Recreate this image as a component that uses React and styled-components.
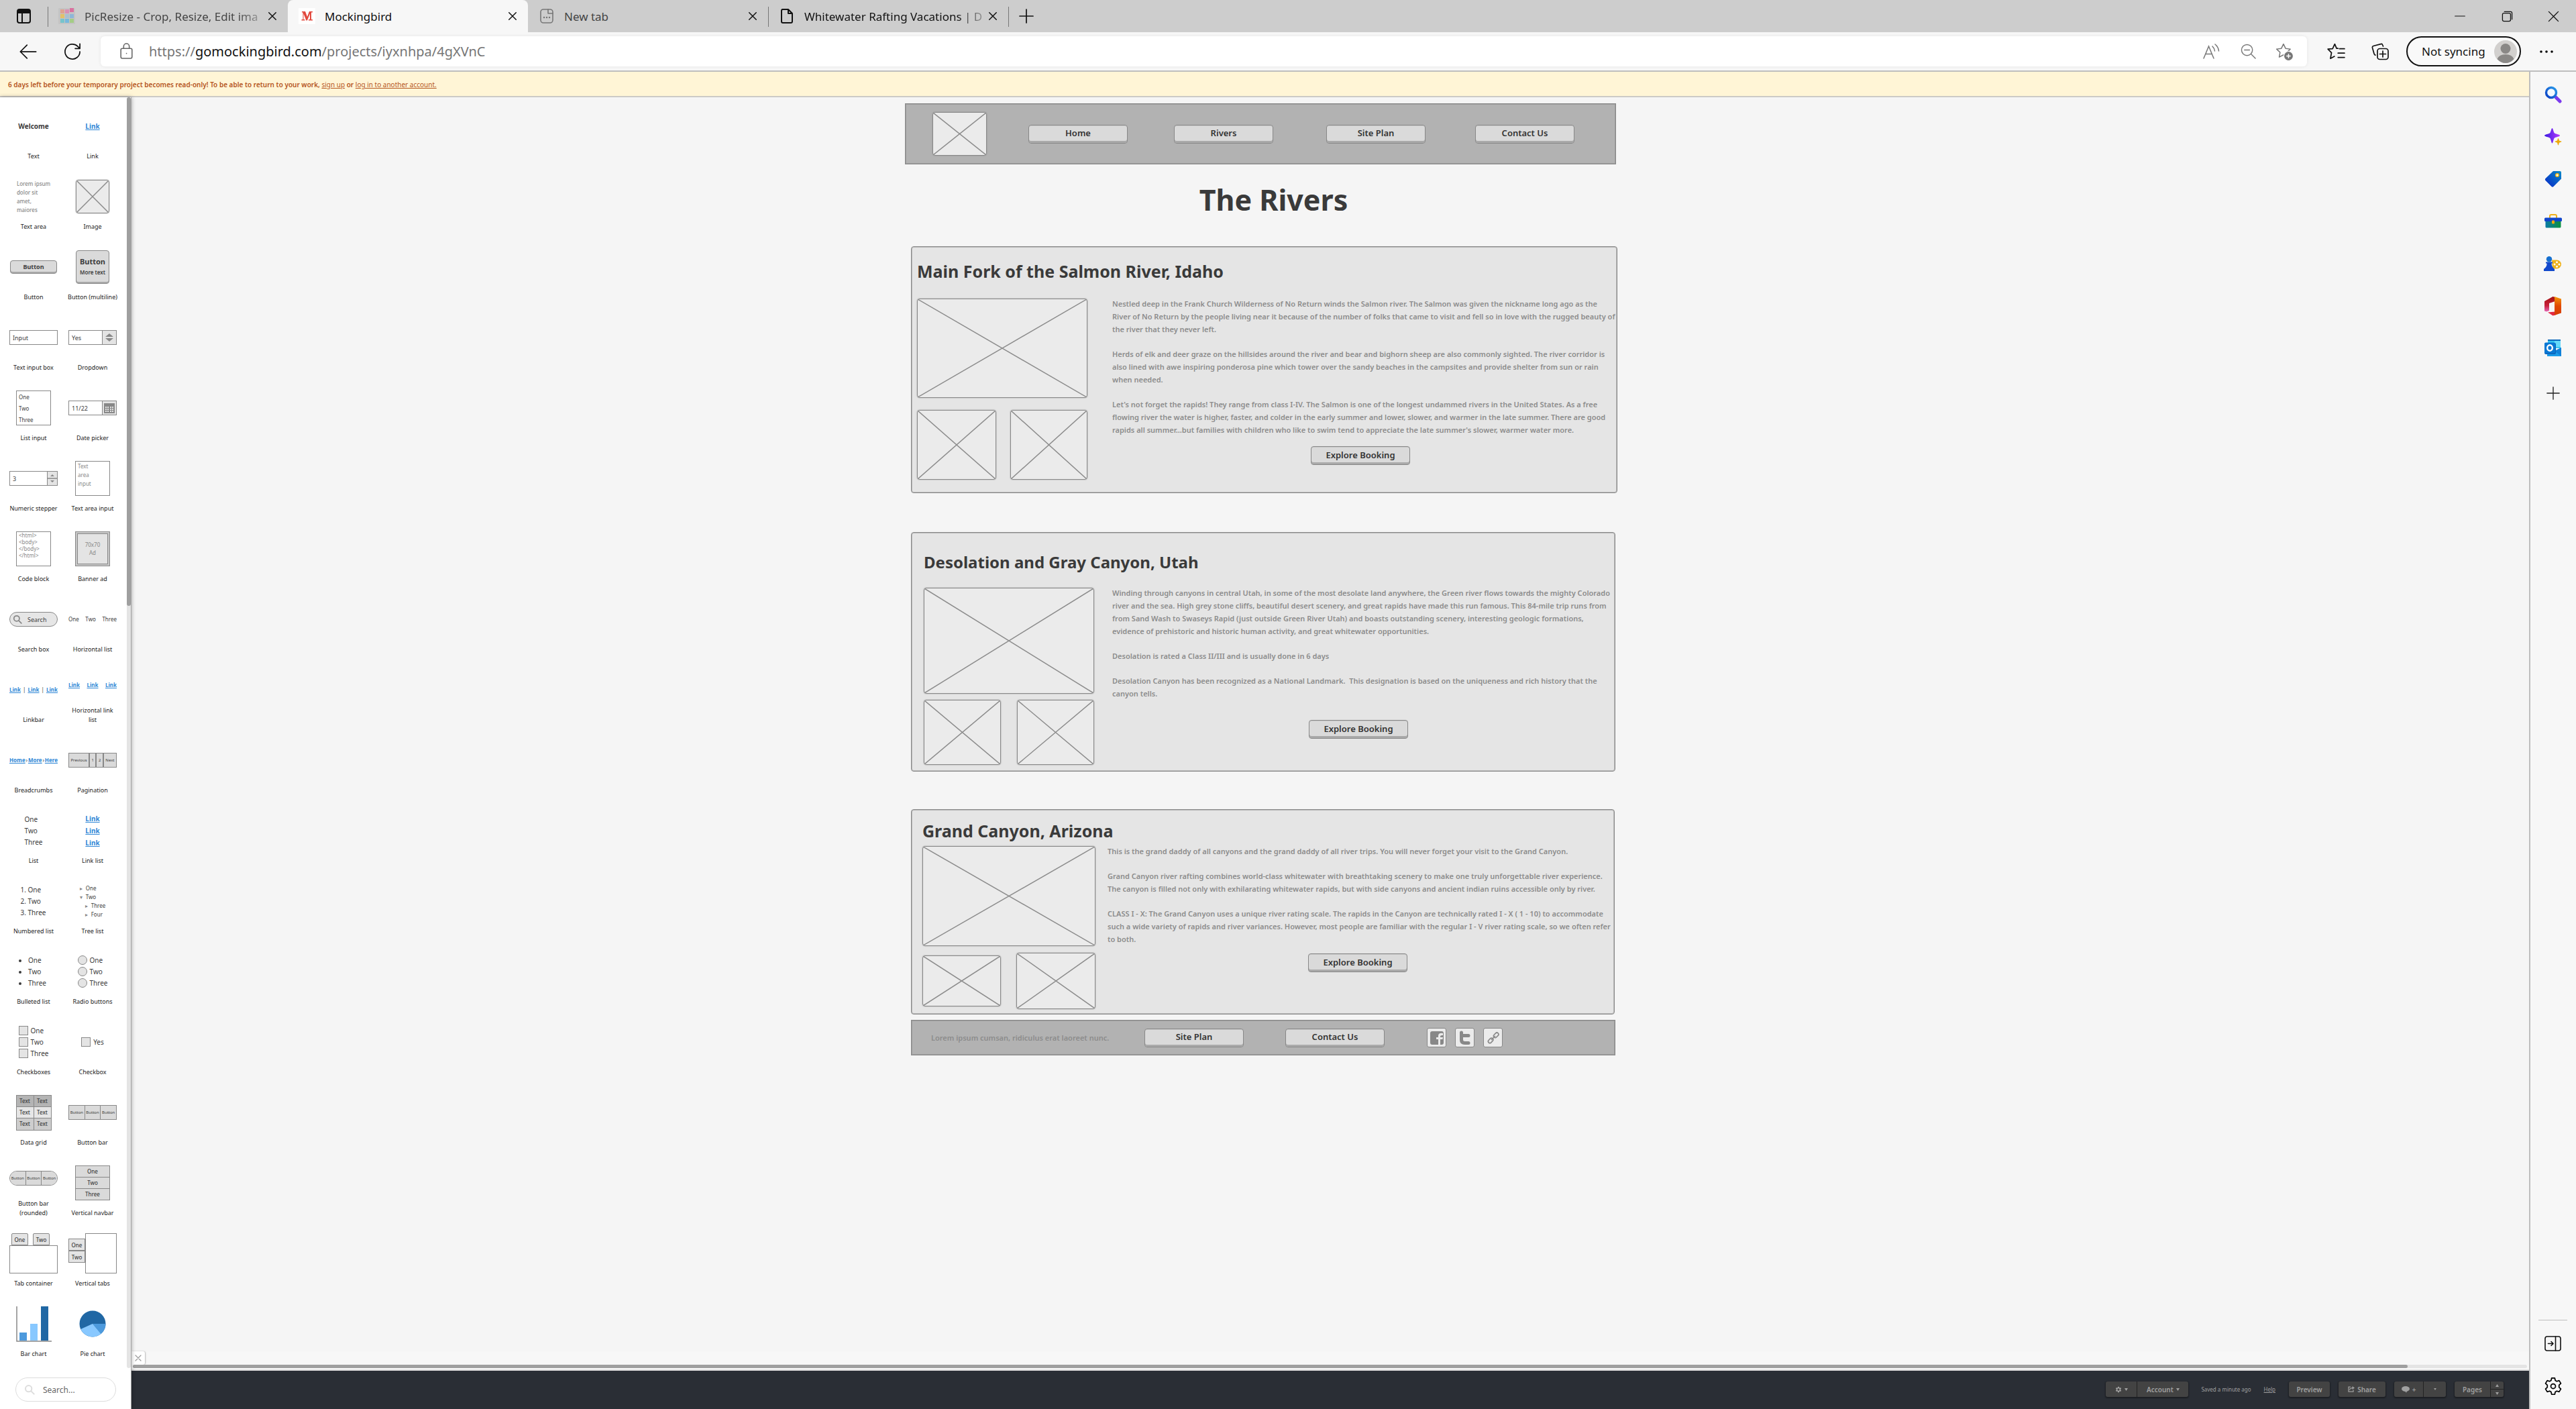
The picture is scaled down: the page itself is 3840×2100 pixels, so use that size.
import React from "react";
import styled, { createGlobalStyle, css } from "styled-components";

const ui = `"Noto Sans", "Open Sans", sans-serif`;

const Global = createGlobalStyle`
  *, *::before, *::after { box-sizing: border-box; }
  body { margin: 0; background: #f5f5f5; font-family: ${ui}; color: #3c3c3c; }
  button, input, select, textarea { font-family: inherit; margin: 0; }
`;

/* ---------- browser frame ---------- */

const Shell = styled.div`
  min-height: 100vh;
  display: flex;
  flex-direction: column;
  background: #f7f7f7;
`;

const TabStrip = styled.header`
  height: 48px;
  background: #cdcdcd;
  display: flex;
  align-items: stretch;
`;

const IconButton = styled.button`
  border: 0;
  padding: 0;
  background: none;
  width: ${(p) => p.$w || 32}px;
  height: ${(p) => p.$h || 32}px;
  display: flex;
  align-items: center;
  justify-content: center;
  flex: none;
  color: ${(p) => p.$color || "#111"};
`;

const TabActions = styled.div`
  width: 71px;
  display: flex;
  align-items: center;
  justify-content: center;
`;

const Tab = styled.div`
  width: 358px;
  display: flex;
  align-items: center;
  gap: 14px;
  padding: 0 13px 0 16px;
  font-size: 17px;
  color: ${(p) => (p.$dark ? "#111" : "#444")};
  position: relative;
  ${(p) =>
    p.$active &&
    css`
      background: #f7f7f7;
      border-radius: 8px 8px 0 0;
    `}
  ${(p) =>
    p.$divided &&
    css`
      &::before {
        content: "";
        position: absolute;
        left: 0;
        top: 10px;
        bottom: 8px;
        width: 1px;
        background: #777;
      }
    `}
`;

const TabTitle = styled.span`
  flex: 1;
  min-width: 0;
  white-space: nowrap;
  margin-right: -14px;
  ${(p) =>
    p.$fade &&
    css`
      mask-image: linear-gradient(to right, #000 84%, rgba(0, 0, 0, 0.2) 100%);
    `}
`;

const TabEnd = styled.div`
  flex: 1;
  display: flex;
  align-items: center;
  padding-left: 11px;
  position: relative;
  &::before {
    content: "";
    position: absolute;
    left: 0;
    top: 10px;
    bottom: 8px;
    width: 1px;
    background: #777;
  }
`;

const WindowButtons = styled.div`
  display: flex;
  align-items: center;
`;

const Toolbar = styled.div`
  height: 59px;
  border-bottom: 2px solid #bebebe;
  display: flex;
  align-items: center;
  padding: 0 7px 0 9px;
`;

const AddressBar = styled.form`
  flex: 1;
  height: 45px;
  margin-left: 9px;
  background: #fff;
  border-radius: 6px;
  box-shadow: 0 0 5px rgba(0, 0, 0, 0.08);
  display: flex;
  align-items: center;
  padding: 0 18px 0 26px;
`;

const Address = styled.a`
  flex: 1;
  padding-left: 21px;
  font-size: 20px;
  color: #767676;
  text-decoration: none;
  b {
    font-weight: 400;
    color: #111;
  }
`;

const ToolGroup = styled.div`
  display: flex;
  align-items: center;
  gap: ${(p) => p.$gap}px;
  padding: ${(p) => p.$pad || "0"};
`;

const Profile = styled.button`
  height: 45px;
  width: 171px;
  border: 2px solid #111;
  border-radius: 23px;
  background: #f9f9f9;
  display: flex;
  align-items: center;
  justify-content: space-between;
  padding: 0 4px 0 21px;
  font-size: 17px;
  color: #111;
`;

const Body = styled.div`
  flex: 1;
  display: flex;
`;

const Page = styled.div`
  flex: 1;
  min-width: 0;
  display: flex;
  flex-direction: column;
`;

const Rail = styled.aside`
  width: 70px;
  border-left: 2px solid #bebebe;
  background: #f7f7f7;
  display: flex;
  flex-direction: column;
  align-items: center;
  padding: 2px 1px 3px 0;
`;

const RailButton = styled.button`
  border: 0;
  padding: 0;
  background: none;
  width: 100%;
  height: ${(p) => (p.$tall ? 72 : 63)}px;
  display: flex;
  align-items: center;
  justify-content: center;
`;

const RailRule = styled.hr`
  width: 43px;
  border: 0;
  border-top: 1px solid #bebebe;
  margin: auto 0 3px;
`;

/* ---------- application ---------- */

const Notice = styled.p`
  margin: 0;
  height: 38px;
  padding-left: 12px;
  line-height: 39px;
  background: #fff5d6;
  border-bottom: 2px solid #cccac6;
  font-size: 10px;
  font-weight: 600;
  color: #b5561e;
  a {
    color: inherit;
    font-weight: 400;
  }
`;

const Workspace = styled.div`
  flex: 1;
  display: flex;
`;

const Palette = styled.aside`
  width: 196px;
  background: #fff;
  border-right: 1px solid #a5a5a5;
  box-shadow: 0 0 6px rgba(0, 0, 0, 0.35);
  position: relative;
  display: flex;
  flex-direction: column;
`;

const PaletteScroll = styled.div`
  display: flex;
  padding-left: 6px;
`;

const PaletteGrid = styled.div`
  flex: 1;
  display: grid;
  grid-template-columns: 88px 88px;
  grid-auto-rows: 105px;
`;

const ScrollTrack = styled.div`
  width: 6px;
  border-radius: 3px;
  background: #e4e4e4;
  margin-bottom: -4px;
`;

const ScrollThumb = styled.div`
  height: 40%;
  border-radius: 3px;
  background: #9f9f9f;
`;

const Cell = styled.div`
  display: flex;
  flex-direction: column;
  align-items: center;
  padding: 5px 0 10px;
`;

const Thumb = styled.div`
  flex: 1;
  display: flex;
  align-items: center;
  justify-content: center;
`;

const CellLabel = styled.span`
  font-size: 9px;
  line-height: 14px;
  color: #222;
  text-align: center;
  margin: 0 -4px;
  white-space: pre;
`;

const PaletteSearch = styled.label`
  width: 150px;
  height: 36px;
  margin: 18px 0 11px 23px;
  border: 1px solid #dcdcdc;
  border-radius: 18px;
  display: flex;
  align-items: center;
  gap: 12px;
  padding: 0 12px;
  input {
    flex: 1;
    min-width: 0;
    border: 0;
    padding: 0;
    font-size: 12px;
    outline: 0;
  }
  input::placeholder {
    color: #666;
  }
`;

/* palette samples */

const line = "#888";

const Copy = styled.span`
  font-size: ${(p) => p.$size || 10}px;
  line-height: ${(p) => p.$lh || 13}px;
  font-weight: ${(p) => (p.$bold ? 700 : 500)};
  color: ${(p) => (p.$soft ? "#888" : "#3c3c3c")};
  white-space: pre;
`;

const DemoLink = styled.a`
  color: #2f87d6;
  font-weight: 700;
  font-size: ${(p) => p.$size || 8}px;
  line-height: 18px;
`;

const LinkRow = styled.nav`
  display: flex;
  width: 72px;
  justify-content: space-between;
  align-items: center;
  font-size: 8px;
  line-height: 14px;
`;

const SampleButton = styled.button`
  border: 1px solid ${line};
  border-radius: 4px;
  background: #dadada;
  box-shadow: inset 0 -2px #aaa;
  color: #3c3c3c;
  font-weight: 700;
  padding: 0;
  width: ${(p) => (p.$square ? 50 : 70)}px;
  height: ${(p) => (p.$square ? 50 : 20)}px;
  font-size: ${(p) => (p.$square ? 11 : 9)}px;
  line-height: 16px;
  small {
    display: block;
    font-size: 8px;
    font-weight: 600;
  }
`;

const Field = styled.div`
  width: 72px;
  height: 22px;
  border: 1px solid ${line};
  background: #fff;
  display: flex;
  align-items: stretch;
`;

const fieldText = css`
  flex: 1;
  min-width: 0;
  border: 0;
  padding: 0 0 0 4px;
  background: none;
  font-size: 9px;
  color: #3c3c3c;
  appearance: none;
`;
const FieldInput = styled.input`
  ${fieldText}
`;
const FieldSelect = styled.select`
  ${fieldText}
`;

const FieldAddon = styled.span`
  width: ${(p) => p.$w}px;
  border-left: 1px solid ${line};
  background: #e4e4e4;
  display: flex;
  align-items: center;
  justify-content: center;
`;

const SampleArea = styled.textarea`
  width: 52px;
  height: 52px;
  resize: none;
  overflow: hidden;
  border: 1px solid ${line};
  padding: 0 3px;
  font-size: 8px;
  line-height: ${(p) => p.$lh}px;
  color: ${(p) => (p.$dark ? "#3c3c3c" : "#888")};
`;

const BannerAd = styled.div`
  width: 52px;
  height: 52px;
  border: 1px solid ${line};
  background: #c8c8c8;
  padding: 2px;
  div {
    height: 100%;
    border: 1px solid ${line};
    background: #e4e4e4;
    display: grid;
    place-content: center;
    text-align: center;
    font-size: 8px;
    line-height: 12px;
    color: #888;
  }
`;

const PillSearch = styled(Field)`
  border-radius: 11px;
  background: #e6e6e6;
  align-items: center;
  padding-left: 4px;
  input {
    padding-left: 8px;
  }
`;

const Bar = styled.div`
  display: flex;
  width: 72px;
  height: 22px;
  border: 1px solid ${line};
  border-radius: ${(p) => (p.$round ? 11 : 0)}px;
  overflow: hidden;
  button {
    flex: ${(p) => (p.$auto ? "auto" : "1")};
    min-width: 0;
    border: 0;
    padding: 0;
    background: #dadada;
    font-size: 6px;
    color: #3c3c3c;
  }
  button + button {
    border-left: ${(p) => (p.$auto ? 2 : 1)}px solid ${line};
  }
`;

const listCss = css`
  margin: 0;
  padding: 0 0 0 ${(p) => p.$indent || 0}px;
  font-size: 10px;
  line-height: 17px;
  list-style: ${(p) => p.$marker || "none"};
`;
const Bullets = styled.ul`
  ${listCss}
`;
const Numbers = styled.ol`
  ${listCss}
`;

const Tree = styled.ul`
  margin: 0;
  padding: 0 0 0 ${(p) => (p.$nested ? 8 : 0)}px;
  list-style: none;
  font-size: 8px;
  line-height: 13px;
  li::before {
    content: "▸";
    color: #888;
    display: inline-block;
    width: 9px;
  }
  li.open::before {
    content: "▾";
  }
`;

const Choices = styled.div`
  display: flex;
  flex-direction: column;
  gap: 3px;
  label {
    display: flex;
    align-items: center;
    gap: 4px;
    font-size: 10px;
    line-height: 14px;
  }
  input {
    appearance: none;
    width: 14px;
    height: 14px;
    border: 1px solid ${line};
    background: #e4e4e4;
  }
  input[type="radio"] {
    border-radius: 50%;
  }
`;

const DataGrid = styled.table`
  width: 53px;
  height: 53px;
  border-collapse: collapse;
  font-size: 8px;
  line-height: 10px;
  th,
  td {
    height: 17px;
    border: 1px solid ${line};
    padding: 0;
    text-align: center;
    font-weight: 500;
    background: #e6e6e6;
  }
  th {
    background: #b4b4b4;
  }
  tr:last-child td {
    background: #cdcdcd;
  }
  thead tr:last-child th {
    background: #b4b4b4;
  }
`;

const VerticalNav = styled.nav`
  width: 52px;
  height: 52px;
  border: 1px solid ${line};
  display: flex;
  flex-direction: column;
  button {
    flex: 1;
    border: 0;
    padding: 0;
    background: #dadada;
    font-size: 8px;
    line-height: 10px;
    font-weight: 500;
    color: #3c3c3c;
  }
  button + button {
    border-top: 1px solid ${line};
  }
`;

const TabBox = styled.div`
  display: flex;
  flex-direction: ${(p) => (p.$side ? "row" : "column")};
  width: 72px;
  height: 60px;
`;

const TabSet = styled.div`
  display: flex;
  flex-direction: ${(p) => (p.$side ? "column" : "row")};
  justify-content: ${(p) => (p.$side ? "center" : "flex-start")};
  gap: ${(p) => (p.$side ? 0 : 7)}px;
  padding: ${(p) => (p.$side ? "0 0 8px" : "0 0 0 3px")};
  button {
    width: 25px;
    height: 18px;
    padding: 0;
    border: 1px solid ${line};
    border-radius: ${(p) => (p.$side ? "0" : "2px 2px 0 0")};
    background: #e4e4e4;
    font-size: 8px;
    font-weight: 500;
    color: #3c3c3c;
  }
`;

const TabPane = styled.div`
  flex: 1;
  border: 1px solid ${line};
  background: #fff;
`;

/* ---------- canvas ---------- */

const CanvasColumn = styled.div`
  flex: 1;
  min-width: 0;
  display: flex;
  flex-direction: column;
`;

const Canvas = styled.main`
  flex: 1;
  background: #f5f5f5;
  display: grid;
  grid-template-columns: minmax(0, 1153fr) 1062px minmax(0, 1359fr);
  align-items: start;
  padding-top: 9px;
`;

const Mockup = styled.div`
  grid-column: 2;
  display: flex;
  flex-direction: column;
`;

const SiteNav = styled.nav`
  width: 1060px;
  height: 91px;
  border: 1px solid #888;
  box-shadow: inset 0 0 0 1px #9c9c9c;
  background: #b2b2b2;
  display: grid;
  grid-template-columns: 143px 217px 227px 222px 148px;
  align-items: center;
  padding-left: 40px;
`;

const SiteTitle = styled.h1`
  margin: 23px 0 39px;
  padding-left: 37px;
  font-size: 43px;
  line-height: 60px;
  font-weight: 700;
  text-align: center;
  color: #3a3a3a;
`;

const WireButton = styled.button`
  width: 148px;
  height: 28px;
  border: 1px solid #888;
  border-radius: 4px;
  background: #dadada;
  box-shadow: inset 0 -3px #aaa, inset 0 1px #c8c8c8;
  padding: 0 0 3px;
  font-size: 13px;
  line-height: 20px;
  font-weight: 600;
  color: #333;
`;

const Card = styled.article`
  width: ${(p) => p.$w}px;
  height: ${(p) => p.$h}px;
  margin: 0 0 ${(p) => p.$after}px 9px;
  border: 1px solid #888;
  border-radius: 4px;
  box-shadow: inset 0 0 0 1px #b8b8b8;
  background: #e5e5e5;
  padding: ${(p) => p.$top}px 0 0 ${(p) => p.$left}px;
`;

const CardTitle = styled.h2`
  margin: 0 0 ${(p) => p.$gap}px;
  font-size: ${(p) => p.$size}px;
  line-height: 34px;
  font-weight: 700;
  color: #3a3a3a;
`;

const CardBody = styled.div`
  display: flex;
  gap: ${(p) => p.$gap}px;
`;

const Media = styled.div`
  width: ${(p) => p.$w}px;
  flex: none;
  padding-top: 2px;
  display: flex;
  flex-direction: column;
  gap: ${(p) => p.$gap}px;
`;

const MediaRow = styled.div`
  display: flex;
  justify-content: space-between;
  align-items: center;
`;

const Frame = styled.div`
  width: ${(p) => (p.$w ? `${p.$w}px` : "100%")};
  height: ${(p) => p.$h}px;
  border: 1px solid #888;
  border-radius: 4px;
  box-shadow: 0 0 1px 1px rgba(136, 136, 136, 0.25);
  background: #ebebeb;
  svg {
    display: block;
    width: 100%;
    height: 100%;
  }
`;

const Prose = styled.div`
  flex: 1;
  min-width: 0;
  display: flex;
  flex-direction: column;
  gap: 18px;
  p {
    margin: 0;
    font-size: 11px;
    line-height: 19px;
    font-weight: 600;
    color: #8c8c8c;
    white-space: pre;
  }
`;

const BookingRow = styled.div`
  display: flex;
  justify-content: flex-end;
  padding-right: 308px;
  margin-top: ${(p) => p.$shift}px;
`;

const SiteFooter = styled.footer`
  width: 1050px;
  height: 53px;
  margin-left: 9px;
  border: 1px solid #888;
  box-shadow: inset 0 0 0 1px #9c9c9c;
  background: #b2b2b2;
  display: grid;
  grid-template-columns: 318px 210px 211px auto;
  align-items: center;
  padding-left: 29px;
  p {
    margin: 0;
    font-size: 11px;
    font-weight: 600;
    color: #8c8c8c;
  }
`;

const SocialRow = styled.div`
  display: flex;
  gap: 13px;
`;

const SocialLink = styled.a`
  width: 29px;
  height: 29px;
  border: 1px solid #888;
  border-radius: 3px;
  background: #ebebeb;
  display: grid;
  place-items: center;
`;

const PanelToggle = styled.button`
  width: 20px;
  height: 20px;
  border: 0;
  border-radius: 0 3px 3px 0;
  background: #fff;
  box-shadow: 1px 0 2px rgba(0, 0, 0, 0.25);
  padding: 0;
  display: grid;
  place-items: center;
`;

const HScroll = styled.div`
  height: 9px;
  padding: 0 3px 0 2px;
  border-bottom: 2px solid #ddd;
  background: #f8f8f8;
`;

const HTrack = styled.div`
  height: 5px;
  border-radius: 3px;
  background: #e4e4e4;
  div {
    width: 95%;
    height: 100%;
    border-radius: 3px;
    background: #9f9f9f;
  }
`;

const StatusBar = styled.footer`
  height: 57px;
  background: #2a2e35;
  display: flex;
  align-items: center;
  justify-content: flex-end;
  padding: 0 38px 2px 0;
  font-size: 8px;
  color: #a0a0a0;
  a {
    color: inherit;
    margin: 0 20px 0 19px;
  }
`;

const Split = styled.div`
  display: flex;
  height: 23px;
  margin-right: ${(p) => p.$gap || 0}px;
  border-radius: 3px;
  box-shadow: 0 1px 2px 1px rgba(0, 0, 0, 0.35);
  overflow: hidden;
`;

const DarkButton = styled.button`
  width: ${(p) => p.$w}px;
  border: 0;
  padding: 0;
  background: #434343;
  color: #a0a0a0;
  font-size: 10px;
  font-weight: 600;
  display: flex;
  align-items: center;
  justify-content: center;
  gap: 4px;
  & + & {
    border-left: 1px solid #222;
  }
`;

const Stepper = styled.div`
  width: 20px;
  border-left: 1px solid #222;
  display: flex;
  flex-direction: column;
  button {
    flex: 1;
    border: 0;
    padding: 0;
    background: #434343;
    color: #a0a0a0;
    display: grid;
    place-items: center;
  }
  button + button {
    border-top: 1px solid #222;
  }
`;

/* ---------- drawings ---------- */

const Stroke = ({ size = 24, w = 1.5, color = "currentColor", children }) => (
  <svg width={size} height={size} viewBox="0 0 24 24" fill="none" stroke={color} strokeWidth={w} strokeLinecap="round" strokeLinejoin="round" aria-hidden="true">
    {children}
  </svg>
);

const Caret = ({ up, size = 5 }) => (
  <svg width={size} height={size - 1} viewBox="0 0 10 8" fill="currentColor" aria-hidden="true">
    <path d={up ? "M5 0l5 8H0z" : "M0 0h10L5 8z"} />
  </svg>
);

const Close = () => (
  <Stroke size={18} w={2}><path d="M5 5l14 14M19 5L5 19" /></Stroke>
);

const CloseTab = () => (
  <IconButton $w={20} aria-label="Close tab"><Close /></IconButton>
);

const Placeholder = ({ w, h }) => (
  <Frame $w={w} $h={h}>
    <svg viewBox="0 0 100 100" preserveAspectRatio="none" aria-hidden="true">
      <path d="M0 0L100 100M100 0L0 100" stroke="#8c8c8c" strokeWidth="1.5" vectorEffect="non-scaling-stroke" />
    </svg>
  </Frame>
);

const Fav = () => (
  <svg width="25" height="24" viewBox="0 0 25 24" aria-hidden="true">
    <rect width="25" height="24" rx="1" fill="#c4c4c4" />
    {[["#e0a290", 3, 2], ["#d98fb5", 10, 2], ["#d9719f", 17, 0], ["#e2c069", 3, 9], ["#a9bfd0", 10, 9], ["#8fb6d8", 17, 9], ["#77c4cc", 3, 16], ["#76b8dd", 10, 16], ["#a4cd86", 17, 16]].map(([c, x, y]) => (
      <rect key={x + "-" + y} x={x} y={y} width="6" height="6" fill={c} />
    ))}
  </svg>
);

const starPath = "M12 2.5l2.9 6 6.6.9-4.8 4.6 1.2 6.5L12 17.4l-5.9 3.1 1.2-6.5L2.5 9.4l6.6-.9z";

const SearchGlyph = () => (
  <svg width="26" height="26" viewBox="0 0 26 26" aria-hidden="true">
    <defs><linearGradient id="sg" x1="0" y1="1" x2="1" y2="0"><stop stopColor="#0a3ec4" /><stop offset="1" stopColor="#2b9bea" /></linearGradient></defs>
    <path d="M17 17l6 6" stroke="#7c3aed" strokeWidth="5" strokeLinecap="round" />
    <circle cx="10" cy="10" r="7.5" fill="#f3f9ff" stroke="url(#sg)" strokeWidth="3.4" />
  </svg>
);
const SparkGlyph = () => (
  <svg width="26" height="26" viewBox="0 0 26 26" aria-hidden="true">
    <defs><linearGradient id="sp"><stop stopColor="#3b1be0" /><stop offset="1" stopColor="#b43cff" /></linearGradient></defs>
    <path d="M11.500 0c1.300 0 1.800 5.500 3.300 7.200 1.700 1.500 8.200 2.200 8.200 3.800s-6.500 2.300-8.200 3.800c-1.500 1.700-2 7.700-3.300 7.700s-1.800-6-3.300-7.700C6.500 13.300 0 12.600 0 11s6.500-2.300 8.200-3.800C9.700 5.500 10.200 0 11.500 0z" fill="url(#sp)" />
    <path d="M20.500 15c.8 0 1 3 1.600 3.600.7.600 3.400.7 3.400 1.500s-2.700 1-3.400 1.600c-.6.600-.8 3.800-1.600 3.800s-1-3.200-1.600-3.800c-.7-.6-3.400-.8-3.400-1.600s2.700-.9 3.400-1.500c.6-.6.8-3.600 1.600-3.600z" fill="#eda90b" />
  </svg>
);
const TagGlyph = () => (
  <svg width="26" height="26" viewBox="0 0 26 26" aria-hidden="true">
    <defs><linearGradient id="tg" x1="0" y1="1" x2="1" y2="0"><stop stopColor="#0827c9" /><stop offset="1" stopColor="#0a8ac6" /></linearGradient></defs>
    <path d="M13 1h10a2 2 0 0 1 2 2v9.500L13.500 24q-1.500 1.500-3 0L1.500 15q-1.200-1.500 0-3z" fill="url(#tg)" />
    <circle cx="19" cy="7" r="2.300" fill="#fff" stroke="#f0b410" strokeWidth="1.500" />
  </svg>
);
const CaseGlyph = () => (
  <svg width="26" height="22" viewBox="0 0 26 22" aria-hidden="true">
    <defs><linearGradient id="cg"><stop stopColor="#0b7aa6" /><stop offset="1" stopColor="#0b9140" /></linearGradient></defs>
    <path d="M8 6V3q0-2 2-2h6q2 0 2 2v3" fill="none" stroke="#efb01a" strokeWidth="2" />
    <rect x="1.500" y="8" width="23" height="12.500" rx="1.500" fill="url(#cg)" />
    <rect y="5.500" width="26" height="5.500" rx="1.500" fill="#1246cc" />
    <rect x="11" y="9.500" width="4" height="5" rx="1" fill="#f0a810" />
  </svg>
);
const GameGlyph = () => (
  <svg width="27" height="22" viewBox="0 0 27 22" aria-hidden="true">
    <path d="M12 5.500h7.500a6.500 6.500 0 0 1 0 13H13z" fill="#eeb21c" />
    <g fill="#fff"><circle cx="19.500" cy="8.800" r="1.500" /><circle cx="16" cy="12" r="1.500" /><circle cx="23" cy="12" r="1.500" /><circle cx="19.500" cy="15.200" r="1.500" /></g>
    <circle cx="8" cy="4.300" r="4.200" fill="#1670d0" />
    <path d="M3 8.500h10v2h-1.500q0 5 4.500 8.500v3H0v-3q5-3.500 4.500-8.500H3z" fill="#1249cc" />
  </svg>
);
const OfficeGlyph = () => (
  <svg width="25" height="30" viewBox="0 0 25 30" aria-hidden="true">
    <defs>
      <linearGradient id="o1" x1="0" y1="0" x2="0" y2="1"><stop stopColor="#a31212" /><stop offset=".6" stopColor="#c8203a" /><stop offset="1" stopColor="#e568b8" /></linearGradient>
      <linearGradient id="o2" x1="0" y1="0" x2="0" y2="1"><stop stopColor="#f59a0a" /><stop offset=".5" stopColor="#e04a04" /><stop offset="1" stopColor="#d63b02" /></linearGradient>
    </defs>
    <path d="M0 8L12.500 1 16 2v6l-9 3v11l-4 1.500-3-1z" fill="url(#o1)" />
    <path d="M5 24.500l11-1v5l-3.500 1z" fill="#e22a42" />
    <path d="M15 1l10 3.500v21L15 29z" fill="url(#o2)" />
  </svg>
);
const OutlookGlyph = () => (
  <svg width="25" height="25" viewBox="0 0 25 25" aria-hidden="true">
    <path d="M5 0h19v13H5z" fill="#39c5f2" /><path d="M5 0h19v2H5z" fill="#0f6bbd" /><path d="M15 2h9v9h-9z" fill="#64dafb" />
    <path d="M4 14l13 3 8-5v13H4z" fill="#1a9be8" /><path d="M25 12v13L15 17z" fill="#1181d8" />
    <rect y="5" width="17" height="17" rx="2" fill="#0b63b8" /><rect y="4.500" width="16" height="16" rx="2" fill="#0a78d4" />
    <ellipse cx="8" cy="12.500" rx="3.800" ry="4.300" fill="none" stroke="#fff" strokeWidth="2.400" />
  </svg>
);

const gearPath = "M12 1.500l2 .2.7 3 1.900 1.100 3-1 2.200 3.700-2.300 2.200v2.600l2.300 2.200-2.200 3.700-3-1-1.900 1.100-.7 3-2 .2-2-.2-.7-3-1.900-1.100-3 1L2.200 15.500l2.300-2.200v-2.600L2.200 8.500l2.200-3.700 3 1 1.900-1.100.7-3z";

const railItems = [
  ["Search", SearchGlyph], ["Discover", SparkGlyph], ["Shopping", TagGlyph], ["Tools", CaseGlyph],
  ["Games", GameGlyph], ["Microsoft 365", OfficeGlyph], ["Outlook", OutlookGlyph],
];

/* ---------- palette content ---------- */

const three = ["One", "Two", "Three"];

const Magnifier = ({ size = 14, color = "#888", w = 3 }) => (
  <Stroke size={size} w={w} color={color}><circle cx="10" cy="10" r="7" /><path d="M15.500 15.500L22 22" /></Stroke>
);

const widgets = [
  ["Text", <Copy $bold>Welcome</Copy>],
  ["Link", <DemoLink href="#link" $size={10}>Link</DemoLink>],
  ["Text area", <Copy $size={8} $soft>{"Lorem ipsum\ndolor sit\namet,\nmaiores"}</Copy>],
  ["Image", <Placeholder w={50} h={50} />],
  ["Button", <SampleButton>Button</SampleButton>],
  ["Button (multiline)", <SampleButton $square>Button<small>More text</small></SampleButton>],
  ["Text input box", <Field><FieldInput aria-label="Text input box" defaultValue="Input" /></Field>],
  ["Dropdown", <Field><FieldSelect aria-label="Dropdown"><option>Yes</option></FieldSelect><FieldAddon $w={21}><svg width="12" height="14" viewBox="0 0 12 14" aria-hidden="true"><path d="M6 1l6 5H0zM6 13l6-5H0z" fill="#888" /></svg></FieldAddon></Field>],
  ["List input", <SampleArea aria-label="List input" $dark $lh={17} readOnly value={"One\nTwo\nThree"} />],
  ["Date picker", <Field><FieldInput aria-label="Date picker" defaultValue="11/22" /><FieldAddon $w={21}><svg width="16" height="15" viewBox="0 0 16 15" aria-hidden="true"><path d="M0 0h16v15H0z" fill="#888" /><path d="M2 5h2v2H2zM5 5h2v2H5zM9 5h2v2H9zM12 5h2v2h-2zM2 8h2v2H2zM5 8h2v2H5zM9 8h2v2H9zM12 8h2v2h-2zM2 11h2v2H2zM5 11h2v2H5zM9 11h2v2H9zM12 11h2v2h-2z" fill="#e4e4e4" /></svg></FieldAddon></Field>],
  ["Numeric stepper", <Field><FieldInput aria-label="Numeric stepper" defaultValue="3" /><FieldAddon $w={15}><svg width="14" height="20" viewBox="0 0 14 20" aria-hidden="true"><path d="M0 10h14" stroke="#888" strokeWidth="1.500" /><path d="M7 4l3 3H4zM7 16l3-3H4z" fill="#888" /></svg></FieldAddon></Field>],
  ["Text area input", <SampleArea aria-label="Text area input" $lh={13} readOnly value={"Text\narea\ninput"} />],
  ["Code block", <SampleArea aria-label="Code block" $lh={10} readOnly value={"<html>\n<body>\n</body>\n</html>"} />],
  ["Banner ad", <BannerAd><div>70x70<br />Ad</div></BannerAd>],
  ["Search box", <PillSearch><Magnifier /><FieldInput aria-label="Search box" defaultValue="Search" /></PillSearch>],
  ["Horizontal list", <LinkRow>{three.map((t) => <span key={t}>{t}</span>)}</LinkRow>],
  ["Linkbar", <LinkRow><DemoLink href="#a">Link</DemoLink>|<DemoLink href="#b">Link</DemoLink>|<DemoLink href="#c">Link</DemoLink></LinkRow>],
  ["Horizontal link\nlist", <LinkRow>{three.map((t) => <DemoLink key={t} href="#link">Link</DemoLink>)}</LinkRow>],
  ["Breadcrumbs", <LinkRow><DemoLink href="#home">Home</DemoLink>›<DemoLink href="#more">More</DemoLink>›<DemoLink href="#here">Here</DemoLink></LinkRow>],
  ["Pagination", <Bar $auto><button>Previous</button><button>1</button><button>2</button><button>Next</button></Bar>],
  ["List", <Bullets>{three.map((t) => <li key={t}>{t}</li>)}</Bullets>],
  ["Link list", <Bullets>{three.map((t) => <li key={t}><DemoLink href="#link" $size={10}>Link</DemoLink></li>)}</Bullets>],
  ["Numbered list", <Numbers $marker="decimal" $indent={10}>{three.map((t) => <li key={t}>{t}</li>)}</Numbers>],
  ["Tree list", <Tree><li>One</li><li className="open">Two<Tree $nested><li>Three</li><li>Four</li></Tree></li></Tree>],
  ["Bulleted list", <Bullets $marker="disc" $indent={11}>{three.map((t) => <li key={t}>{t}</li>)}</Bullets>],
  ["Radio buttons", <Choices>{three.map((t) => <label key={t}><input type="radio" name="sample" />{t}</label>)}</Choices>],
  ["Checkboxes", <Choices>{three.map((t) => <label key={t}><input type="checkbox" />{t}</label>)}</Choices>],
  ["Checkbox", <Choices><label><input type="checkbox" />Yes</label></Choices>],
  ["Data grid", <DataGrid><thead><tr><th>Text</th><th>Text</th></tr></thead><tbody><tr><td>Text</td><td>Text</td></tr><tr><td>Text</td><td>Text</td></tr></tbody></DataGrid>],
  ["Button bar", <Bar>{three.map((t) => <button key={t}>Button</button>)}</Bar>],
  ["Button bar\n(rounded)", <Bar $round>{three.map((t) => <button key={t}>Button</button>)}</Bar>],
  ["Vertical navbar", <VerticalNav>{three.map((t) => <button key={t}>{t}</button>)}</VerticalNav>],
  ["Tab container", <TabBox><TabSet><button>One</button><button>Two</button></TabSet><TabPane /></TabBox>],
  ["Vertical tabs", <TabBox $side><TabSet $side><button>One</button><button>Two</button></TabSet><TabPane /></TabBox>],
  ["Bar chart", <svg width="53" height="53" aria-hidden="true"><path d="M1 0v52h52" fill="none" stroke="#888" strokeWidth="1.500" /><rect x="5" y="39" width="11" height="12" fill="#4d9add" /><rect x="21" y="26" width="11" height="25" fill="#88c8ff" /><rect x="37" y="0" width="11" height="51" fill="#2067a4" /></svg>],
  ["Pie chart", <svg width="40" height="40" viewBox="-20 -20 40 40" aria-hidden="true"><circle r="19.500" fill="#2067a4" /><path d="M0 0L19.500 0A19.500 19.500 0 0 1 12.500 15z" fill="#4d9add" /><path d="M0 0L12.500 15A19.500 19.500 0 0 1 -17.800 8z" fill="#88c8ff" /></svg>],
];

const rivers = [
  {
    name: "Main Fork of the Salmon River, Idaho",
    card: { $w: 1053, $h: 368, $after: 58, $top: 19, $left: 8 }, size: 25, titleGap: 22, gap: 37,
    media: { $w: 254, $gap: 18 }, big: 148, small: [[118, 104], [115, 104]], shift: -3,
    text: [
      "Nestled deep in the Frank Church Wilderness of No Return winds the Salmon river. The Salmon was given the nickname long ago as the\nRiver of No Return by the people living near it because of the number of folks that came to visit and fell so in love with the rugged beauty of\nthe river that they never left.",
      "Herds of elk and deer graze on the hillsides around the river and bear and bighorn sheep are also commonly sighted. The river corridor is\nalso lined with awe inspiring ponderosa pine which tower over the sandy beaches in the campsites and provide shelter from sun or rain\nwhen needed.",
      "Let's not forget the rapids! They range from class I-IV. The Salmon is one of the longest undammed rivers in the United States. As a free\nflowing river the water is higher, faster, and colder in the early summer and lower, slower, and warmer in the late summer. There are good\nrapids all summer...but families with children who like to swim tend to appreciate the late summer's slower, warmer water more.",
    ],
  },
  {
    name: "Desolation and Gray Canyon, Utah",
    card: { $w: 1050, $h: 357, $after: 56, $top: 27, $left: 18 }, size: 24, titleGap: 19, gap: 27,
    media: { $w: 254, $gap: 9 }, big: 158, small: [[115, 97], [115, 97]], shift: 12,
    text: [
      "Winding through canyons in central Utah, in some of the most desolate land anywhere, the Green river flows towards the mighty Colorado\nriver and the sea. High grey stone cliffs, beautiful desert scenery, and great rapids have made this run famous. This 84-mile trip runs from\nfrom Sand Wash to Swaseys Rapid (just outside Green River Utah) and boasts outstanding scenery, interesting geologic formations,\nevidence of prehistoric and historic human activity, and great whitewater opportunities.",
      "Desolation is rated a Class II/III and is usually done in 6 days",
      "Desolation Canyon has been recognized as a National Landmark.  This designation is based on the uniqueness and rich history that the\ncanyon tells.",
    ],
  },
  {
    name: "Grand Canyon, Arizona",
    card: { $w: 1049, $h: 306, $after: 8, $top: 14, $left: 16 }, size: 25, titleGap: 4, gap: 18,
    media: { $w: 258, $gap: 10 }, big: 149, small: [[117, 76], [118, 84]], shift: -6,
    text: [
      "This is the grand daddy of all canyons and the grand daddy of all river trips. You will never forget your visit to the Grand Canyon.",
      "Grand Canyon river rafting combines world-class whitewater with breathtaking scenery to make one truly unforgettable river experience.\nThe canyon is filled not only with exhilarating whitewater rapids, but with side canyons and ancient indian ruins accessible only by river.",
      "CLASS I - X: The Grand Canyon uses a unique river rating scale. The rapids in the Canyon are technically rated I - X ( 1 - 10) to accommodate\nsuch a wide variety of rapids and river variances. However, most people are familiar with the regular I - V river rating scale, so we often refer\nto both.",
    ],
  },
];

const River = ({ r }) => (
  <Card {...r.card}>
    <CardTitle $size={r.size} $gap={r.titleGap}>{r.name}</CardTitle>
    <CardBody $gap={r.gap}>
      <Media {...r.media}>
        <Placeholder h={r.big} />
        <MediaRow>{r.small.map(([w, h], i) => <Placeholder key={i} w={w} h={h} />)}</MediaRow>
      </Media>
      <Prose>
        {r.text.map((t) => <p key={t}>{t}</p>)}
        <BookingRow $shift={r.shift}><WireButton>Explore Booking</WireButton></BookingRow>
      </Prose>
    </CardBody>
  </Card>
);

export default function App() {
  return (
    <Shell>
      <Global />
      <TabStrip>
        <TabActions>
          <IconButton aria-label="Tab actions"><svg width="21" height="22" viewBox="0 0 21 22" aria-hidden="true"><rect x="1" y="1" width="19" height="20" rx="3" fill="none" stroke="#111" strokeWidth="2" /><path d="M2 1h17v6H2z" fill="#111" /><path d="M8 7v14" stroke="#111" strokeWidth="2" /></svg></IconButton>
        </TabActions>
        <Tab $divided>
          <Fav /><TabTitle $fade>PicResize - Crop, Resize, Edit ima</TabTitle><CloseTab />
        </Tab>
        <Tab $active $dark>
          <svg width="25" height="24" viewBox="0 0 25 24" aria-hidden="true"><path d="M0 0h25v24H0z" fill="#fff" /><path d="M5 5h5l3 8 3-8h5v1.500h-2V17h2v1.500h-6V17h2V8.500l-4 10h-1.500l-4-10V17h2v1.500H4.500V17h2V6.500H5z" fill="#e2483d" /></svg>
          <TabTitle>Mockingbird</TabTitle><CloseTab />
        </Tab>
        <Tab>
          <Stroke size={24} w={1.6} color="#777"><rect x="3" y="2" width="18" height="20" rx="4" /><path d="M14 2v6h7" /><path d="M8 14h.1M12 14h.1M16 14h.1" strokeWidth="2.400" /></Stroke>
          <TabTitle>New tab</TabTitle><CloseTab />
        </Tab>
        <Tab $divided $dark>
          <Stroke size={24} w={2}><path d="M5 2h9l6 6v12q0 2-2 2H6q-2 0-2-2V4q0-2 2-2M14 2v6h6" /></Stroke>
          <TabTitle $fade>Whitewater Rafting Vacations | D</TabTitle><CloseTab />
        </Tab>
        <TabEnd><IconButton aria-label="New tab"><Stroke size={24} w={1.7}><path d="M12 2v20M2 12h20" /></Stroke></IconButton></TabEnd>
        <WindowButtons>
          <IconButton $w={70} aria-label="Minimize"><Stroke size={16} w={1.8}><path d="M1 12h22" /></Stroke></IconButton>
          <IconButton $w={70} aria-label="Restore"><Stroke size={17} w={1.8}><rect x="2" y="5" width="17" height="17" rx="3" /><path d="M6 2h13q3 0 3 3v13" /></Stroke></IconButton>
          <IconButton $w={68} aria-label="Close"><Stroke size={17} w={1.8}><path d="M2 2l20 20M22 2L2 22" /></Stroke></IconButton>
        </WindowButtons>
      </TabStrip>

      <Toolbar>
        <IconButton $w={66} aria-label="Back"><Stroke size={28}><path d="M22 12H2M10.500 3.500L2 12l8.500 8.500" /></Stroke></IconButton>
        <IconButton $w={66} aria-label="Refresh"><Stroke size={28}><path d="M21.500 12a9.500 9.500 0 1 1-3-7L21 7.500M21.500 2v6h-6" /></Stroke></IconButton>
        <AddressBar>
          <Stroke size={25} color="#666"><rect x="4" y="8" width="16" height="14" rx="2" /><path d="M8 8V5a4 4 0 0 1 8 0v3M12 15h.1" /></Stroke>
          <Address href="#project">https://<b>gomockingbird.com</b>/projects/iyxnhpa/4gXVnC</Address>
          <ToolGroup $gap={22}>
            <IconButton $color="#777" aria-label="Read aloud"><svg width="26" height="26" viewBox="0 0 26 26" fill="none" stroke="currentColor" strokeWidth="1.500" strokeLinecap="round" aria-hidden="true"><path d="M1 23L8.500 5 16 23M4 16.500h9M14 5q3 3 3.500 7M18 2q5 4 5.500 10" /></svg></IconButton>
            <IconButton $color="#777" aria-label="Zoom out"><Stroke size={23}><circle cx="10" cy="10" r="8.500" /><path d="M6 10h8M16.500 16.500L23 23" /></Stroke></IconButton>
            <IconButton $color="#777" aria-label="Add to favorites"><svg width="28" height="28" viewBox="0 0 26 26" fill="none" stroke="currentColor" strokeWidth="1.400" strokeLinejoin="round" aria-hidden="true"><path d={starPath} /><circle cx="19" cy="19" r="6.500" fill="#777" stroke="#fff" strokeWidth="1" /><path d="M19 16v6M16 19h6" stroke="#fff" /></svg></IconButton>
          </ToolGroup>
        </AddressBar>
        <ToolGroup $gap={34} $pad="0 23px 0 27px">
          <IconButton aria-label="Favorites"><svg width="28" height="28" viewBox="0 0 26 26" fill="none" stroke="#111" strokeWidth="1.600" strokeLinejoin="round" strokeLinecap="round" aria-hidden="true"><path d="M16 8.500h-2L11.500 2.500 8.500 9 2 9.500l5 5-1.500 8 5.500-3M18 9h7M16 15h9M16 21h9" /></svg></IconButton>
          <IconButton aria-label="Collections"><svg width="26" height="26" viewBox="0 0 26 26" fill="none" stroke="#111" strokeWidth="1.700" strokeLinejoin="round" strokeLinecap="round" aria-hidden="true"><rect x="9" y="8.500" width="16" height="16" rx="3.500" /><path d="M17 12v9M12.500 16.500h9M17.500 5l-.8-2q-.7-2-2.700-1.400L3 4.500Q1 5 1.500 7.200L4 16q.6 2 2 2.200" /></svg></IconButton>
        </ToolGroup>
        <Profile>Not syncing
          <svg width="34" height="34" viewBox="0 0 34 34" aria-hidden="true"><circle cx="17" cy="17" r="17" fill="#d2d0ce" /><circle cx="17" cy="12.500" r="7.500" fill="#8a8886" /><path d="M4.500 28q3-7 12.500-7t12.500 7Q24 34 17 34T4.500 28z" fill="#8a8886" /></svg>
        </Profile>
        <IconButton $w={75} aria-label="Settings and more"><svg width="20" height="4" viewBox="0 0 20 4" aria-hidden="true"><circle cx="2" cy="2" r="1.800" /><circle cx="10" cy="2" r="1.800" /><circle cx="18" cy="2" r="1.800" /></svg></IconButton>
      </Toolbar>

      <Body>
        <Page>
          <Notice>6 days left before your temporary project becomes read-only! To be able to return to your work, <a href="#signup">sign up</a> or <a href="#login">log in to another account.</a></Notice>
          <Workspace>
            <Palette>
              <PaletteScroll>
                <PaletteGrid>
                  {widgets.map(([name, sample]) => (
                    <Cell key={name}><Thumb>{sample}</Thumb><CellLabel>{name}</CellLabel></Cell>
                  ))}
                </PaletteGrid>
                <ScrollTrack><ScrollThumb /></ScrollTrack>
              </PaletteScroll>
              <PaletteSearch><Magnifier size={16} color="#ddd" /><input aria-label="Search widgets" placeholder="Search..." /></PaletteSearch>
            </Palette>

            <CanvasColumn>
              <Canvas>
                <Mockup>
                  <SiteNav>
                    <Placeholder w={81} h={65} />
                    <WireButton>Home</WireButton><WireButton>Rivers</WireButton><WireButton>Site Plan</WireButton><WireButton>Contact Us</WireButton>
                  </SiteNav>
                  <SiteTitle>The Rivers</SiteTitle>
                  {rivers.map((r) => <River key={r.name} r={r} />)}
                  <SiteFooter>
                    <p>Lorem ipsum cumsan, ridiculus erat laoreet nunc.</p>
                    <WireButton>Site Plan</WireButton><WireButton>Contact Us</WireButton>
                    <SocialRow>
                      <SocialLink href="#facebook" aria-label="Facebook"><svg width="20" height="20" viewBox="0 0 20 20" aria-hidden="true"><rect width="20" height="20" rx="3" fill="#888" /><path d="M12 20v-8H9V9h3V7q0-5 7-4v3q-4-.5-4 1.500V9h4l-.5 3H15v8z" fill="#ebebeb" /></svg></SocialLink>
                      <SocialLink href="#twitter" aria-label="Twitter"><svg width="17" height="21" viewBox="0 0 17 21" aria-hidden="true"><path d="M3.500 3v11q0 4.500 5 4.500H14M4 7.500h10" stroke="#888" strokeWidth="5" fill="none" strokeLinecap="round" /></svg></SocialLink>
                      <SocialLink href="#link" aria-label="Link"><Stroke size={20} w={2} color="#888"><rect x="-4.500" y="-3" width="10" height="6" rx="3" transform="translate(7 17) rotate(-45)" /><rect x="-5" y="-3" width="10" height="6" rx="3" transform="translate(17 7) rotate(-45)" /><path d="M9 15l6-6" /></Stroke></SocialLink>
                    </SocialRow>
                  </SiteFooter>
                </Mockup>
              </Canvas>
              <PanelToggle aria-label="Close panel"><Stroke size={12} w={2.4} color="#999"><path d="M4 4l16 16M20 4L4 20" /></Stroke></PanelToggle>
              <HScroll><HTrack><div /></HTrack></HScroll>
              <StatusBar>
                <Split $gap={19}>
                  <DarkButton $w={46} aria-label="Options"><svg width="10" height="10" viewBox="0 0 24 24" aria-hidden="true"><path d={gearPath} fill="#a0a0a0" /><circle cx="12" cy="12" r="4" fill="#434343" /></svg><Caret /></DarkButton>
                  <DarkButton $w={77}>Account <Caret /></DarkButton>
                </Split>
                <span>Saved a minute ago</span>
                <a href="#help">Help</a>
                <Split $gap={13}><DarkButton $w={61}>Preview</DarkButton></Split>
                <Split $gap={13}><DarkButton $w={70}><svg width="10" height="9" viewBox="0 0 20 18" fill="none" stroke="#a0a0a0" strokeWidth="2.500" aria-hidden="true"><path d="M8 2H2v14h14v-5M5 11q1-6 9-6" /><path d="M13 0l7 5-7 5z" fill="#a0a0a0" stroke="none" /></svg>Share</DarkButton></Split>
                <Split $gap={13}>
                  <DarkButton $w={43} aria-label="Add comment"><svg width="12" height="10" viewBox="0 0 12 10" fill="#a0a0a0" aria-hidden="true"><ellipse cx="6" cy="4" rx="6" ry="4" /><path d="M5 7l3 0-1 3z" /></svg>+</DarkButton>
                  <DarkButton $w={34} aria-label="Comment options"><Caret size={4} /></DarkButton>
                </Split>
                <Split>
                  <DarkButton $w={53}>Pages</DarkButton>
                  <Stepper><button aria-label="Previous page"><Caret up /></button><button aria-label="Next page"><Caret /></button></Stepper>
                </Split>
              </StatusBar>
            </CanvasColumn>
          </Workspace>
        </Page>

        <Rail>
          {railItems.map(([name, Glyph]) => <RailButton key={name} aria-label={name}><Glyph /></RailButton>)}
          <RailButton $tall aria-label="Customize"><Stroke size={20} w={1.6} color="#222"><path d="M12 1v22M1 12h22" /></Stroke></RailButton>
          <RailRule />
          <RailButton aria-label="Hide sidebar"><svg width="25" height="23" viewBox="0 0 25 23" fill="none" stroke="#111" strokeWidth="1.600" strokeLinejoin="round" strokeLinecap="round" aria-hidden="true"><rect x="1" y="1" width="23" height="21" rx="3" /><path d="M16.500 1v21M5.500 11.500h7M10 8.500l3 3-3 3" /></svg></RailButton>
          <RailButton aria-label="Settings"><Stroke size={28}><path d={gearPath} /><circle cx="12" cy="12" r="3" /></Stroke></RailButton>
        </Rail>
      </Body>
    </Shell>
  );
}
